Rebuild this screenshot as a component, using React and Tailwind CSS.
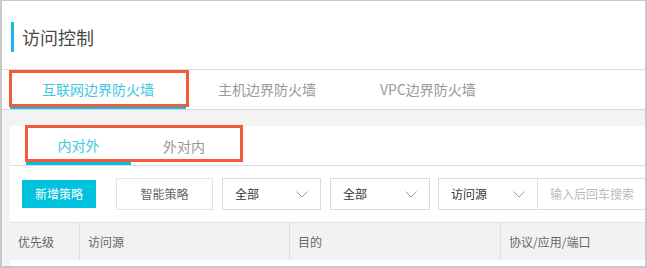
import React from 'react';

const font = { fontFamily: '"Noto Sans CJK SC", "Noto Sans", sans-serif' };

const Chevron = () => (
    <svg width="12" height="7" viewBox="0 0 12 7" className="shrink-0">
        <polyline points="0.5,0.5 6,6 11.5,0.5" fill="none" stroke="#9a9a9a" strokeWidth="1" />
    </svg>
);

const Select = ({ label, width }) => (
    <div className={`flex h-[32px] items-center justify-between border border-[#dcdcdc] bg-white pl-[12px] pr-[12px] text-[12px] text-[#333] ${width}`}>
        <span>{label}</span>
        <Chevron />
    </div>
);

const App = () => {
    return (
        <div className="flex h-[268px] w-[647px] flex-col border-x-2 border-t border-b-2 border-[#c8c8c8] bg-white" style={font}>
            {/* Tiêu đề */}
            <div className="flex h-[69px] shrink-0 items-center border-b border-[#dcdcdc] pl-[9px] pt-[3px]">
                <div className="h-[30px] w-[3px] bg-[#1fb4ea]"></div>
                <div className="ml-[8px] text-[18px] leading-none text-[#4a4a4a]">访问控制</div>
            </div>

            {/* Tab chính */}
            <div className="flex h-[40px] shrink-0 border-b border-[#d9d9d9] pl-[8px] text-[14px]">
                <div className="relative flex items-center border-b-[3px] border-[#00c1de] px-[32px] pt-[3px] text-[#3cc6e2]">
                    互联网边界防火墙
                    <div className="absolute -left-[1px] top-0 h-[37px] w-[180px] border-[3px] border-[#f25a3b]"></div>
                </div>
                <div className="flex items-center px-[32px] text-[#999]">主机边界防火墙</div>
                <div className="flex items-center px-[32px] text-[#999]">VPC边界防火墙</div>
            </div>

            {/* Nội dung */}
            <div className="flex min-h-0 flex-1 flex-col bg-[#f3f3f3] pl-[8px] pt-[16px]">
                <div className="flex flex-1 flex-col bg-white">
                    <div className="flex h-[40px] shrink-0 border-b border-[#dcdcdc] pl-[16px] text-[14px]">
                        <div className="relative flex w-[105px] items-center justify-center border-b-[3px] border-[#00c1de] pt-[2px] text-[#3cc6e2]">
                            内对外
                            <div className="absolute -left-[1px] -top-[1px] h-[37px] w-[218px] border-[3px] border-[#f25a3b]"></div>
                        </div>
                        <div className="flex w-[106px] items-center justify-center pt-[1px] text-[#999]">外对内</div>
                    </div>

                    <div className="flex shrink-0 items-center pl-[12px] pt-[12px] text-[12px]">
                        <div className="flex h-[28px] w-[74px] items-center justify-center bg-[#00c1de] text-white">新增策略</div>
                        <div className="ml-[20px] flex h-[32px] w-[97px] items-center justify-center border border-[#e3e3e3] text-[#666]">智能策略</div>
                        <div className="ml-[9px]"><Select label="全部" width="w-[99px]" /></div>
                        <div className="ml-[9px]"><Select label="全部" width="w-[100px]" /></div>
                        <div className="ml-[8px]"><Select label="访问源" width="w-[100px]" /></div>
                        <div className="flex h-[32px] flex-1 items-center border-y border-[#dcdcdc] pl-[12px] text-[#bbb]">输入后回车搜索</div>
                    </div>

                    <div className="mt-[12px] flex h-[38px] shrink-0 border-t border-[#e3e3e3] bg-[#f2f2f2] text-[12px] text-[#666]">
                        <div className="flex w-[70px] items-center border-r border-[#e0e0e0] pl-[8px]">优先级</div>
                        <div className="flex w-[210px] items-center border-r border-[#e0e0e0] pl-[8px]">访问源</div>
                        <div className="flex w-[211px] items-center border-r border-[#e0e0e0] pl-[8px]">目的</div>
                        <div className="flex flex-1 items-center pl-[8px]">协议/应用/端口</div>
                    </div>
                </div>
            </div>
        </div>
    );
};

export default App;
